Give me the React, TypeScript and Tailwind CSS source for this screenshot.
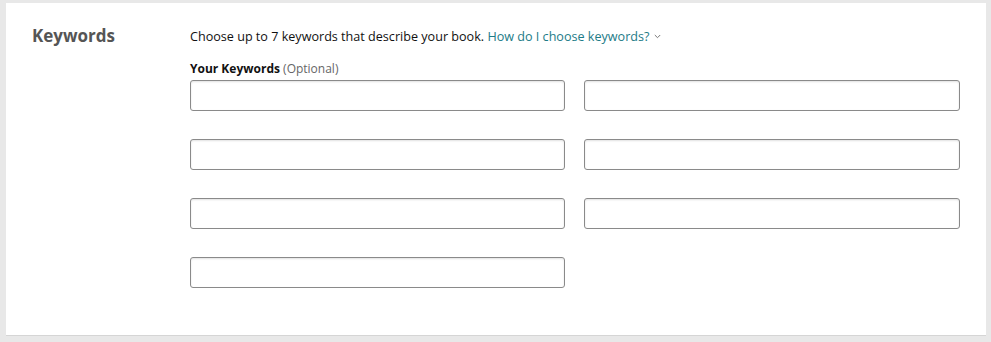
import React from 'react';

// Keywords section of a book setup form
const SLOTS = [0, 1, 2, 3, 4, 5, 6];

export default function App() {
    return (
        <div className="w-[991px] h-[342px] bg-[#e8e8e8] pt-[3px] pl-[6px] pr-[5px] font-['Open_Sans',sans-serif]">
            <div className="bg-white h-[333px] border-b border-[#d5d5d5] flex pl-[26px] pt-[20px]">
                {/* Section title */}
                <h2 className="w-[158px] text-[17px] font-bold text-[#555] leading-[26px]">Keywords</h2>

                <div className="flex flex-col pt-[4px]">
                    <p className="text-[12.6px] text-[#111] leading-[20px]">
                        Choose up to 7 keywords that describe your book.{' '}
                        <span className="text-[#1d7b87]">How do I choose keywords?</span>
                        <svg className="inline-block ml-[5px] mb-[2px]" width="7" height="5" viewBox="0 0 7 5">
                            <path d="M0.8 1 L3.5 3.7 L6.2 1" fill="none" stroke="#777" strokeWidth="1" />
                        </svg>
                    </p>
                    <p className="mt-[14px] text-[12px] leading-[16px] text-[#111]">
                        <span className="font-bold">Your Keywords</span>{' '}
                        <span className="text-[#666]">(Optional)</span>
                    </p>

                    <div className="mt-[3px] grid grid-cols-[375px_376px] gap-x-[19px] gap-y-[28px]">
                        {SLOTS.map((i) => (
                            <input
                                key={i}
                                type="text"
                                className="h-[31px] border border-[#8a8a8a] rounded-[3px] bg-white shadow-[inset_0_1px_2px_rgba(0,0,0,0.12)] outline-none px-2 text-[13px]"
                            />
                        ))}
                    </div>
                </div>
            </div>
        </div>
    );
}
